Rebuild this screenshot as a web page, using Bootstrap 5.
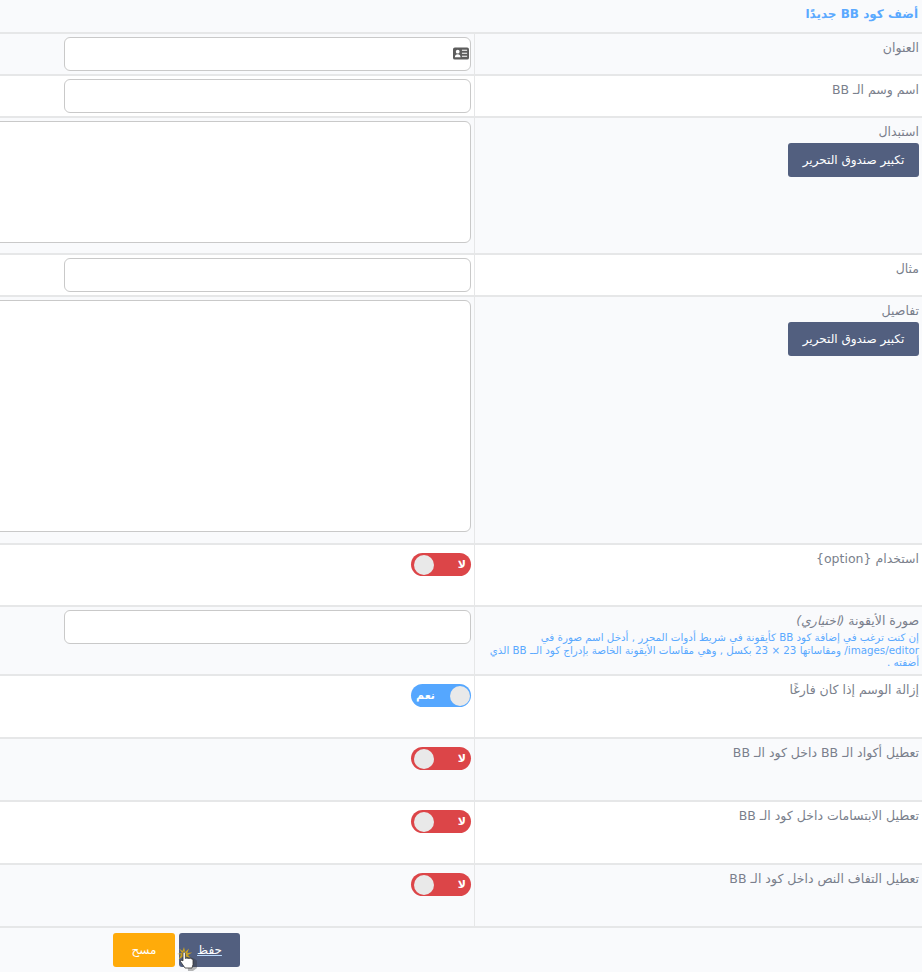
<!DOCTYPE html>
<html lang="ar" dir="rtl">
<head>
<meta charset="utf-8">
<title>أضف كود BB جديدًا</title>
<link href="https://cdn.jsdelivr.net/npm/bootstrap@5.3.0/dist/css/bootstrap.min.css" rel="stylesheet">
<style>
html,body{margin:0;background:#fff;overflow:hidden;height:972px}
body{font-family:"DejaVu Sans",sans-serif;font-size:12.5px;color:#76838f;width:922px}
.bbhead{height:32px;background:#f9fafc;color:#5aa9ff;font-weight:700;font-size:12px;padding:6px 4px 0 0;line-height:16px}
.bbrow{display:flex;border-top:2px solid #e6e7e8;background:#fff}
.bbrow.alt{background:#f9fafc}
.bblabel{flex:none;padding:6px 3px 0 4px;border-left:1px solid #e6e7e8;line-height:16px;color:#7a7f8c;width:448px}
.bbvalue{flex:1;padding:3px 3px 0 0;min-width:0;position:relative}
.bbinput{height:34px;width:407px;border:1px solid #c9c9c9;border-radius:6px;background:#fff;padding:0}
.bbinput.has-ic{position:relative}
.bbarea{width:560px;border:1px solid #c9c9c9;border-radius:6px;background:#fff;padding:0;display:block;resize:vertical;box-shadow:none}
.bbgrow{margin-top:3px;padding:0;height:34px;width:131px;background:#525f7f;color:#fff;border:0;border-radius:3px;font-size:12px;line-height:34px;display:block}
.bbnote{color:#5aa9ff;font-size:10.3px;line-height:12.5px;padding-top:2px}
.bbswitch{width:60px;height:23px;border-radius:12px;display:flex;align-items:center;justify-content:space-between;margin-top:5px;color:#fff;font-size:11px;font-weight:700;line-height:1}
.bbswitch.off{background:#dc4548;padding:0 5px 0 3px}
.bbswitch.on{background:#55a7ff;padding:0 1px 0 5px}
.bbknob{width:20px;height:20px;border-radius:50%;background:#e9e9e9;flex:none}
.bbfoot{border-top:2px solid #e6e7e8;background:#f9fafc;height:46px;padding:5px 682px 0 0;display:flex;gap:4px}
.bbact{width:61px;height:34px;border:0;border-radius:3px;color:#fff;font-size:12px;padding:0;line-height:34px;position:relative}
.bbsave{background:#525f7f;text-decoration:underline;text-decoration-color:#bcdcff}
.bbdel{background:#ffab0a;width:62px}
.bbicon{position:absolute;right:1px;top:9px}
.bbcursor{position:absolute;left:-2px;top:14px;pointer-events:none}
.h42{min-height:42px}.h137{min-height:137px}.h248{min-height:248px}.h62{min-height:62px}.h69{min-height:69px}.h63{min-height:63px}
</style>
</head>
<body>
<div class="bbhead">أضف كود BB جديدًا</div>

<div class="bbrow alt h42"><div class="bblabel">العنوان</div><div class="bbvalue"><div class="bbinput has-ic form-control">
<svg class="bbicon" width="16" height="13" viewBox="0 0 17 13" aria-hidden="true"><rect width="17" height="13" rx="2" fill="#5c5c5c"/><circle cx="5" cy="4.6" r="2" fill="#fff"/><path d="M2 10.5c0-2.2 1.2-3.2 3-3.2s3 1 3 3.2z" fill="#fff"/><path d="M9.5 3h5.5M9.5 6.2h5.5M9.5 9.4h5.5" stroke="#fff" stroke-width="1.2"/></svg>
</div></div></div>

<div class="bbrow h42"><div class="bblabel">اسم وسم الـ BB</div><div class="bbvalue"><input class="bbinput form-control" type="text"></div></div>

<div class="bbrow alt h137"><div class="bblabel">استبدال<button type="button" class="btn bbgrow">تكبير صندوق التحرير</button></div><div class="bbvalue"><textarea class="bbarea form-control" style="height:122px"></textarea></div></div>

<div class="bbrow h42"><div class="bblabel">مثال</div><div class="bbvalue"><input class="bbinput form-control" type="text"></div></div>

<div class="bbrow alt h248"><div class="bblabel">تفاصيل<button type="button" class="btn bbgrow">تكبير صندوق التحرير</button></div><div class="bbvalue"><textarea class="bbarea form-control" style="height:232px"></textarea></div></div>

<div class="bbrow h62"><div class="bblabel">استخدام {option}</div><div class="bbvalue"><div class="bbswitch off"><span>لا</span><span class="bbknob"></span></div></div></div>

<div class="bbrow alt h69"><div class="bblabel">صورة الأيقونة <em>(اختياري)</em><div class="bbnote">إن كنت ترغب في إضافة كود BB كأيقونة في شريط أدوات المحرر , أدخل اسم صورة في images/editor/ ومقاساتها 23 × 23 بكسل , وهي مقاسات الأيقونة الخاصة بإدراج كود الــ BB الذي أضفته .</div></div><div class="bbvalue"><input class="bbinput form-control" type="text"></div></div>

<div class="bbrow h63"><div class="bblabel">إزالة الوسم إذا كان فارغًا</div><div class="bbvalue"><div class="bbswitch on"><span class="bbknob"></span><span>نعم</span></div></div></div>

<div class="bbrow alt h63"><div class="bblabel">تعطيل أكواد الـ BB داخل كود الـ BB</div><div class="bbvalue"><div class="bbswitch off"><span>لا</span><span class="bbknob"></span></div></div></div>

<div class="bbrow h63"><div class="bblabel">تعطيل الابتسامات داخل كود الـ BB</div><div class="bbvalue"><div class="bbswitch off"><span>لا</span><span class="bbknob"></span></div></div></div>

<div class="bbrow alt h63"><div class="bblabel">تعطيل التفاف النص داخل كود الـ BB</div><div class="bbvalue"><div class="bbswitch off"><span>لا</span><span class="bbknob"></span></div></div></div>

<div class="bbfoot">
<button type="button" class="btn bbact bbsave">حفظ
<svg class="bbcursor" width="24" height="24" viewBox="0 0 24 24" aria-hidden="true"><path d="M7 0l1.200 5L12 1.500 10.300 6l5-.5-4.400 2.400 3.200 3.600-5-2-1 5-2-5-4.500 3 2.600-5L0 7l5-1-3-4.500L5.500 4z" fill="#c9a227"/><path d="M10 10c4 0 9 2 10 4v7l-4 3h-5z" fill="#333" opacity=".35"/><path d="M6 5.500c1-1 2.400 0 2.400 1v5l1.500-.5 1.700.5 1.700-.3 1.700.8 1 .5v5l-1 3.500H8L3.500 14.500l.5-1.500 2 .8z" fill="#fff" stroke="#333" stroke-width=".8"/></svg>
</button>
<button type="button" class="btn bbact bbdel">مسح</button>
</div>
</body>
</html>
